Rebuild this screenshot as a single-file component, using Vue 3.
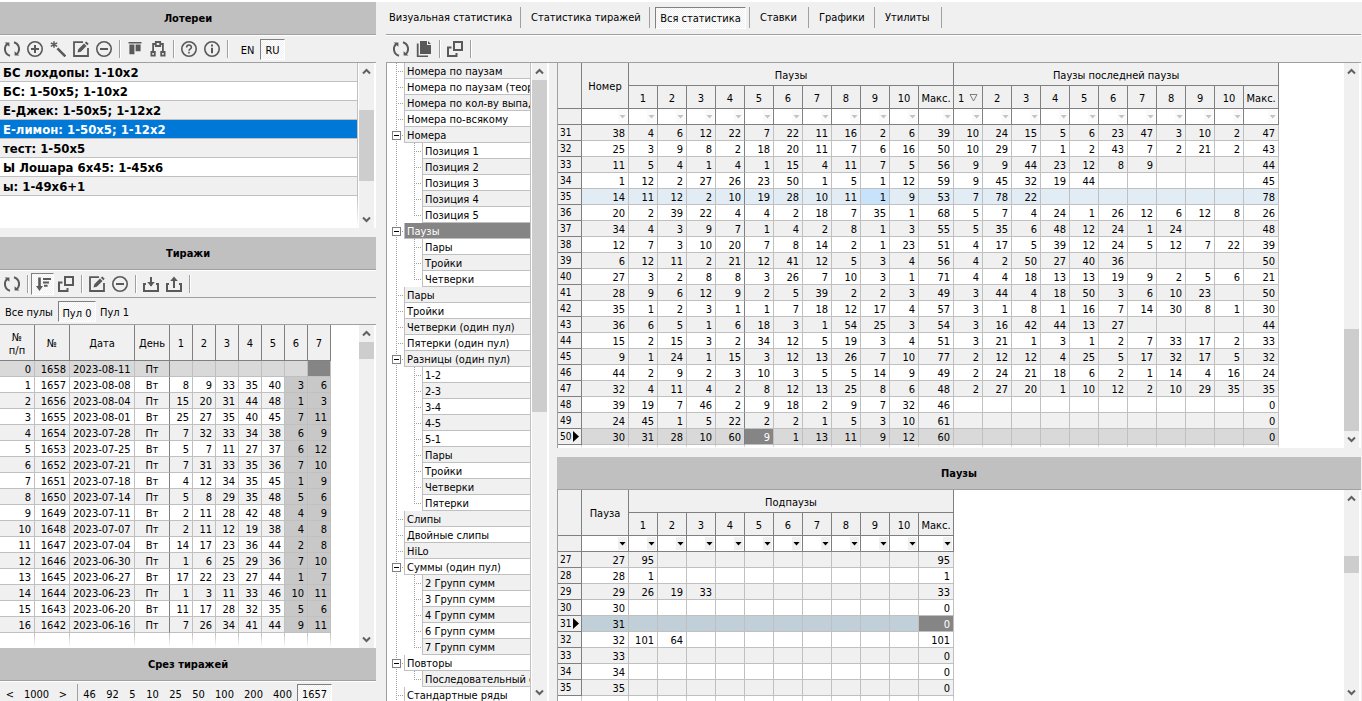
<script setup>
import { h } from 'vue'

const iconShapes = {
  refresh: [
    ['path', { d: 'M6 14.8A7 7 0 0 1 3.6 2.6M10 1.2A7 7 0 0 1 12.4 13.4', 'stroke-width': 2 }],
    ['path', { d: 'M.6 1.4h4.8v4.4zM15.4 14.6h-4.8v-4.4z', class: 'solid' }]
  ],
  plus: [
    ['circle', { cx: 8, cy: 8, r: 7.2 }],
    ['path', { d: 'M8 4v8M4 8h8', 'stroke-width': 2 }]
  ],
  minus: [
    ['circle', { cx: 8, cy: 8, r: 7.2 }],
    ['path', { d: 'M4 8h8', 'stroke-width': 2 }]
  ],
  wand: [
    ['path', { d: 'M7.4 7.4l8 8', 'stroke-width': 2.6 }],
    ['path', { d: 'M4 .2v6.6M.8 1.8l6.4 3.6M7.2 1.8L.8 5.4', 'stroke-width': 1.5 }]
  ],
  edit: [
    ['path', { d: 'M10 1.2H1v13.8h14V7', 'stroke-width': 1.8 }],
    ['path', { d: 'M4.5 11.5l.8-3.2L11 2.6l2.5 2.5-5.7 5.6zM11.8 1.8L13.3.4l2.4 2.4-1.4 1.5z', class: 'solid' }]
  ],
  columns: [
    ['path', { d: 'M1.5 1h13v1.4h-13zM2.4 3.4h5v9.8h-5zM8.6 3.4h5v6.8h-5z', class: 'solid' }]
  ],
  nodes: [
    ['path', { d: 'M5.8 1h4.4v4H5.8zM1.4 11h3.4v3.6H1.4zM11.2 11h3.4v3.6h-3.4zM5.8 3H3.1v8M10.2 3h2.7v8', 'stroke-width': 1.8 }]
  ],
  help: [
    ['circle', { cx: 8, cy: 8, r: 7.2 }],
    ['path', { d: 'M5.6 6.5C5.6 3.2 10.4 3.2 10.4 6.3C10.4 8 8 7.8 8 9.8M8 10.8v1.8' }]
  ],
  info: [
    ['circle', { cx: 8, cy: 8, r: 7.2 }],
    ['path', { d: 'M8 3.6v1.8M8 6.8v5.4', 'stroke-width': 2 }]
  ],
  sort: [
    ['path', { d: 'M3.2 1.5h2.6v8.5H8l-3.5 5L1 10h2.2zM8 2h8v2H8zM8 5.4h6v2H8zM9 8.8h3.6v2H9z', class: 'solid' }]
  ],
  windows: [
    ['path', { d: 'M7 1h8v8H7zM4.5 6.5H1V15h8.5v-3', 'stroke-width': 2 }]
  ],
  download: [
    ['path', { d: 'M3 8H1v7h14V8h-2M8 1v9', 'stroke-width': 2 }],
    ['path', { d: 'M4.2 6h7.6L8 10.6z', class: 'solid' }]
  ],
  upload: [
    ['path', { d: 'M3 8H1v7h14V8h-2M8 12V2', 'stroke-width': 2 }],
    ['path', { d: 'M4.2 5h7.6L8 .4z', class: 'solid' }]
  ],
  copy: [
    ['path', { d: 'M4 0h7v4h4v9H4zM12 0l3 3h-3zM.8 2.6h1.8v12H12V16H.8z', class: 'solid' }]
  ]
}

const Icon = (props) =>
  h(
    'svg',
    { class: 'icon', viewBox: '0 0 16 16', 'aria-hidden': 'true' },
    iconShapes[props.name].map(([tag, attrs]) => h(tag, attrs))
  )
Icon.props = ['name']

const ScrollBar = (props) => {
  const arrow = (label, d) =>
    h('button', { type: 'button', class: 'scroll-arrow', 'aria-label': label }, [
      h('svg', { viewBox: '0 0 9 7', 'aria-hidden': 'true' }, [h('path', { d })])
    ])
  const [before, size, after] = props.parts
  return h('div', { class: 'scrollbar' }, [
    arrow('Вверх', 'M1 5.5L4.5 2L8 5.5'),
    h('div', { class: 'scroll-track' }, [
      h('span', { style: { flexGrow: before } }),
      h('span', { class: 'scroll-thumb', style: { flexGrow: size } }),
      h('span', { style: { flexGrow: after } })
    ]),
    arrow('Вниз', 'M1 1.5L4.5 5L8 1.5')
  ])
}
ScrollBar.props = ['parts']

const lotteryTools = [
  ['refresh', 'Обновить'], ['plus', 'Добавить'], ['wand', 'Мастер'], ['edit', 'Изменить'], ['minus', 'Удалить'], null,
  ['columns', 'Столбцы'], ['nodes', 'Структура'], null,
  ['help', 'Справка'], ['info', 'О программе'], null
]
const drawTools = [
  ['refresh', 'Обновить'], null,
  ['sort', 'Сортировка', true], ['windows', 'Окна'], null,
  ['edit', 'Изменить'], ['minus', 'Удалить'], null,
  ['download', 'Загрузить'], ['upload', 'Выгрузить'], null
]
const statTools = [['refresh', 'Обновить'], ['copy', 'Копировать'], null, ['windows', 'Окна'], null]

const lotteries = [
  'БС лохдопы: 1-10x2', 'БС: 1-50x5; 1-10x2', 'Е-Джек: 1-50x5; 1-12x2', 'Е-лимон: 1-50x5; 1-12x2',
  'тест: 1-50x5', 'Ы Лошара 6x45: 1-45x6', 'ы: 1-49x6+1'
]

const draws = `0 1658 2023-08-11 Пт - - - - - - -
1 1657 2023-08-08 Вт 8 9 33 35 40 3 6
2 1656 2023-08-04 Пт 15 20 31 44 48 1 3
3 1655 2023-08-01 Вт 25 27 35 40 45 7 11
4 1654 2023-07-28 Пт 7 32 33 34 38 6 9
5 1653 2023-07-25 Вт 5 7 11 27 37 6 12
6 1652 2023-07-21 Пт 7 31 33 35 36 7 10
7 1651 2023-07-18 Вт 4 12 34 35 45 1 9
8 1650 2023-07-14 Пт 5 8 29 35 48 5 6
9 1649 2023-07-11 Вт 2 11 28 42 48 4 9
10 1648 2023-07-07 Пт 2 11 12 19 38 4 8
11 1647 2023-07-04 Вт 14 17 23 36 44 2 8
12 1646 2023-06-30 Пт 1 6 25 29 36 7 10
13 1645 2023-06-27 Вт 17 22 23 27 44 1 7
14 1644 2023-06-23 Пт 1 3 11 33 46 10 11
15 1643 2023-06-20 Вт 11 17 28 32 35 5 6
16 1642 2023-06-16 Пт 7 26 34 41 44 9 11`
  .split('\n')
  .map((line) => line.split(' ').map((v) => (v === '-' ? '' : v)))

const slices = ['46', '92', '5', '10', '25', '50', '100', '200', '400']

const tabs = ['Визуальная статистика', 'Статистика тиражей', 'Вся статистика', 'Ставки', 'Графики', 'Утилиты']

const treeData = [
  ['Номера по паузам'], ['Номера по паузам (теория)'], ['Номера по кол-ву выпадений'], ['Номера по-всякому'],
  ['Номера', ['Позиция 1', 'Позиция 2', 'Позиция 3', 'Позиция 4', 'Позиция 5']],
  ['Паузы', ['Пары', 'Тройки', 'Четверки']],
  ['Пары'], ['Тройки'], ['Четверки (один пул)'], ['Пятерки (один пул)'],
  ['Разницы (один пул)', ['1-2', '2-3', '3-4', '4-5', '5-1', 'Пары', 'Тройки', 'Четверки', 'Пятерки']],
  ['Слипы'], ['Двойные слипы'], ['HiLo'],
  ['Суммы (один пул)', ['2 Групп сумм', '3 Групп сумм', '4 Групп сумм', '6 Групп сумм', '7 Групп сумм']],
  ['Повторы', ['Последовательный список']],
  ['Стандартные ряды']
]
const treeRows = treeData.flatMap(([label, children]) => [
  { label, open: Boolean(children), selected: label === 'Паузы' },
  ...(children || []).map((child, i) => ({ label: child, child: true, last: i === children.length - 1 }))
])

// Columns: number, ten pauses, maximum, ten pauses of the last pause, maximum.
const pauseRows = `38 4 6 12 22 7 22 11 16 2 6 39 10 24 15 5 6 23 47 3 10 2 47
25 3 9 8 2 18 20 11 7 6 16 50 10 29 7 1 2 43 7 2 21 2 43
11 5 4 1 4 1 15 4 11 7 5 56 9 9 44 23 12 8 9 - - - 44
1 12 2 27 26 23 50 1 5 1 12 59 9 45 32 19 44 - - - - - 45
14 11 12 2 10 19 28 10 11 1 9 53 7 78 22 - - - - - - - 78
20 2 39 22 4 4 2 18 7 35 1 68 5 7 4 24 1 26 12 6 12 8 26
34 4 3 9 7 1 4 2 8 1 3 55 5 35 6 48 12 24 1 24 - - 48
12 7 3 10 20 7 8 14 2 1 23 51 4 17 5 39 12 24 5 12 7 22 39
6 12 11 2 21 12 41 12 5 3 4 56 4 2 50 27 40 36 - - - - 50
27 3 2 8 8 3 26 7 10 3 1 71 4 4 18 13 13 19 9 2 5 6 21
28 9 6 12 9 2 5 39 2 2 3 49 3 44 4 18 50 3 6 10 23 - 50
35 1 2 3 1 1 7 18 12 17 4 57 3 1 8 1 16 7 14 30 8 1 30
36 6 5 1 6 18 3 1 54 25 3 54 3 16 42 44 13 27 - - - - 44
15 2 15 3 2 34 12 5 19 3 4 51 3 21 1 3 1 2 7 33 17 2 33
9 1 24 1 15 3 12 13 26 7 10 77 2 12 12 4 25 5 17 32 17 5 32
44 2 9 2 3 10 3 5 5 14 9 49 2 24 21 18 6 2 1 14 4 16 24
32 4 11 4 2 8 12 13 25 8 6 48 2 27 20 1 10 12 2 10 29 35 35
39 19 7 46 2 9 18 2 9 7 32 46 - - - - - - - - - - 0
24 45 1 5 22 2 2 1 5 3 10 61 - - - - - - - - - - 0
30 31 28 10 60 9 1 13 11 9 12 60 - - - - - - - - - - 0`
  .split('\n')
  .map((line, i) => ({ id: 31 + i, cells: line.split(' ').map((v) => (v === '-' ? '' : v)) }))

const subPauses = [
  [27, ['95'], '95'], [28, ['1'], '1'], [29, ['26', '19', '33'], '33'], [30, [], '0'], [31, [], '0'],
  [32, ['101', '64'], '101'], [33, [], '0'], [34, [], '0'], [35, [], '0']
].map(([id, values, max]) => ({
  id,
  cells: [String(id), ...Array.from({ length: 10 }, (_, i) => values[i] || ''), max]
}))

const mainCellClass = (row, i) => ({
  split: i === 4,
  hot: row.id === 35 && i === 9,
  current: row.id === 50 && i === 5
})
</script>

<template>
  <div class="app">
    <aside class="side">
      <h2 class="band">Лотереи</h2>
      <div class="toolbar">
        <template v-for="(tool, i) in lotteryTools" :key="i">
          <button v-if="tool" type="button" class="tool" :aria-label="tool[1]"><Icon :name="tool[0]" /></button>
          <span v-else class="sep"></span>
        </template>
        <button type="button" class="lang first">EN</button>
        <button type="button" class="lang pressed">RU</button>
      </div>
      <div class="list-panel">
        <div class="list">
          <button
            v-for="(name, i) in lotteries"
            :key="name"
            type="button"
            class="list-row"
            :class="{ chosen: i === 3 }"
          >{{ name }}</button>
          <span class="list-tail"></span>
        </div>
        <ScrollBar :parts="[30, 71, 30]" />
      </div>

      <h2 class="band spaced">Тиражи</h2>
      <div class="toolbar">
        <template v-for="(tool, i) in drawTools" :key="i">
          <button v-if="tool" type="button" class="tool" :class="{ pressed: tool[2] }" :aria-label="tool[1]">
            <Icon :name="tool[0]" />
          </button>
          <span v-else class="sep"></span>
        </template>
      </div>
      <div class="pools">
        <button type="button">Все пулы</button>
        <button type="button" class="pressed">Пул 0</button>
        <button type="button">Пул 1</button>
      </div>
      <div class="grid-panel">
        <div class="grid-body">
          <table class="grid draws">
            <colgroup>
              <col class="w35" /><col class="w35" /><col class="w65" /><col class="w35" />
              <col v-for="n in 7" :key="n" class="w23" />
            </colgroup>
            <thead>
              <tr class="tall">
                <th>№<br />п/п</th><th>№</th><th>Дата</th><th>День</th>
                <th v-for="n in 7" :key="n">{{ n }}</th>
              </tr>
            </thead>
            <tbody>
              <tr v-for="(row, r) in draws" :key="r" :class="{ active: r === 0 }">
                <td
                  v-for="(value, i) in row"
                  :key="i"
                  :class="{ date: i === 2, day: i === 3, extra: r > 0 && i > 8, current: r === 0 && i === 10 }"
                >{{ value }}</td>
              </tr>
              <tr class="tail"><td v-for="n in 11" :key="n"></td></tr>
            </tbody>
          </table>
        </div>
        <ScrollBar :parts="[0, 17, 270]" />
      </div>

      <h2 class="band">Срез тиражей</h2>
      <div class="slices">
        <button type="button" class="step">&lt;</button>
        <button type="button" class="total">1000</button>
        <button type="button" class="step">&gt;</button>
        <span class="sep"></span>
        <button v-for="s in slices" :key="s" type="button" :class="'digits' + s.length">{{ s }}</button>
        <button type="button" class="digits4 pressed">1657</button>
      </div>
    </aside>

    <main class="main">
      <nav class="tabs">
        <div v-for="(tab, i) in tabs" :key="tab" class="tab">
          <button type="button" :class="{ pressed: i === 2 }">{{ tab }}</button>
        </div>
      </nav>
      <div class="toolbar stat-tools">
        <template v-for="(tool, i) in statTools" :key="i">
          <button v-if="tool" type="button" class="tool" :aria-label="tool[1]"><Icon :name="tool[0]" /></button>
          <span v-else class="sep"></span>
        </template>
      </div>

      <div class="work">
        <div class="tree-panel">
          <ul class="tree">
            <li v-for="(row, i) in treeRows" :key="i" class="tree-row">
              <span class="branch" :class="{ leaf: !row.child }">
                <button v-if="row.open" type="button" class="toggle" :aria-label="'Свернуть ' + row.label"></button>
              </span>
              <span v-if="row.child" class="branch inner" :class="{ last: row.last }"></span>
              <span class="tree-label" :class="{ alt: i % 2 === 0, selected: row.selected }">{{ row.label }}</span>
            </li>
          </ul>
          <ScrollBar :parts="[0, 332, 272]" />
        </div>

        <div class="tables">
          <div class="grid-panel framed">
            <div class="grid-body">
              <table class="grid stats pale">
                <colgroup>
                  <col class="w24" /><col class="w47" />
                  <col v-for="n in 10" :key="n" class="w29" /><col class="w35" />
                  <col v-for="n in 10" :key="'b' + n" class="w29" /><col class="w35" />
                </colgroup>
                <thead>
                  <tr>
                    <th rowspan="2"></th><th rowspan="2">Номер</th>
                    <th colspan="11">Паузы</th><th colspan="11">Паузы последней паузы</th>
                  </tr>
                  <tr>
                    <th v-for="n in 10" :key="n">{{ n }}</th><th>Макс.</th>
                    <th class="sorted">1
                      <svg viewBox="0 0 9 8" aria-hidden="true"><path d="M1 .5h7L4.5 7z" /></svg>
                    </th>
                    <th v-for="n in 9" :key="'b' + n">{{ n + 1 }}</th><th>Макс.</th>
                  </tr>
                  <tr class="filters">
                    <th></th>
                    <td v-for="n in 23" :key="n">
                      <div class="filter"><select :aria-label="'Фильтр столбца ' + n"></select><i></i></div>
                    </td>
                  </tr>
                </thead>
                <tbody>
                  <tr v-for="row in pauseRows" :key="row.id" :class="{ marked: row.id === 35, active: row.id === 50 }">
                    <th><span class="row-id">{{ row.id }}<i v-if="row.id === 50"></i></span></th>
                    <td v-for="(value, i) in row.cells" :key="i" :class="mainCellClass(row, i)">{{ value }}</td>
                  </tr>
                  <tr class="tail short"><th></th><td v-for="n in 23" :key="n"></td></tr>
                </tbody>
              </table>
            </div>
            <ScrollBar :parts="[249, 102, 0]" />
          </div>

          <h2 class="band spaced">Паузы</h2>
          <div class="grid-panel framed grow">
            <div class="grid-body">
              <table class="grid stats">
                <colgroup>
                  <col class="w24" /><col class="w47" />
                  <col v-for="n in 10" :key="n" class="w29" /><col class="w35" />
                </colgroup>
                <thead>
                  <tr><th rowspan="2"></th><th rowspan="2">Пауза</th><th colspan="11">Подпаузы</th></tr>
                  <tr><th v-for="n in 10" :key="n">{{ n }}</th><th>Макс.</th></tr>
                  <tr class="filters">
                    <th></th>
                    <td v-for="n in 12" :key="n">
                      <div class="filter"><select :aria-label="'Фильтр подпауз ' + n"></select><i></i></div>
                    </td>
                  </tr>
                </thead>
                <tbody>
                  <tr v-for="row in subPauses" :key="row.id" :class="{ focused: row.id === 31 }">
                    <th><span class="row-id">{{ row.id }}<i v-if="row.id === 31"></i></span></th>
                    <td v-for="(value, i) in row.cells" :key="i" :class="{ current: row.id === 31 && i === 11 }">{{ value }}</td>
                  </tr>
                  <tr class="tail"><th></th><td v-for="n in 12" :key="n"></td></tr>
                </tbody>
              </table>
            </div>
            <ScrollBar :parts="[49, 17, 111]" />
          </div>
        </div>
      </div>
    </main>
  </div>
</template>

<style>
body {
  margin: 0;
  background: #f0f0f0;
}
.icon {
  width: 16px;
  height: 16px;
  fill: none;
  stroke: #595959;
  stroke-width: 1.6;
}
.icon .solid {
  fill: #595959;
  stroke: none;
}
.scrollbar {
  flex: none;
  display: flex;
  flex-direction: column;
  width: 15px;
  background: #f0f0f0;
}
.scroll-arrow {
  flex: none;
  display: grid;
  place-items: center;
  height: 17px;
  padding: 0;
  border: 0;
  background: #f0f0f0;
}
.scroll-arrow svg {
  width: 9px;
  height: 7px;
  fill: none;
  stroke: #606060;
  stroke-width: 2;
}
.scroll-track {
  flex: 1;
  display: flex;
  flex-direction: column;
}
.scroll-thumb {
  background: #cdcdcd;
}
</style>

<style scoped>
.app,
.app * {
  box-sizing: border-box;
}
.app {
  display: flex;
  gap: 10px;
  height: 100vh;
  overflow: hidden;
  border-top: 2px solid #fff;
  background: #f0f0f0;
  color: #000;
  font: 11px/13px "DejaVu Sans Condensed", "DejaVu Sans", "Noto Sans", sans-serif;
}
button {
  margin: 0;
  padding: 0;
  border: 1px solid transparent;
  background: none;
  color: inherit;
  font: inherit;
  white-space: nowrap;
}
button.pressed {
  border-color: #808080 #fff #fff #808080;
  background: repeating-conic-gradient(#fff 0 25%, #f0f0f0 0 50%) 0 0 / 2px 2px;
}
.side {
  flex: none;
  width: 376px;
  display: flex;
  flex-direction: column;
}
.side > * {
  flex: none;
}
.main {
  flex: 1;
  min-width: 0;
  display: flex;
  flex-direction: column;
  margin-right: 1px;
}
.band {
  flex: none;
  margin: 0;
  height: 33px;
  padding-top: 2px;
  border-bottom: 1px solid #a0a0a0;
  background: #c0c0c0;
  font-size: 11px;
  line-height: 30px;
  font-weight: bold;
  text-align: center;
}
.band.spaced {
  margin-top: 9px;
}
.toolbar {
  flex: none;
  display: flex;
  align-items: center;
  height: 28px;
  border-top: 1px solid #fff;
  border-bottom: 1px solid #a0a0a0;
}
.tool {
  display: grid;
  place-items: center;
  width: 23px;
  height: 22px;
}
.sep {
  flex: none;
  width: 8px;
  height: 18px;
  background: linear-gradient(90deg, transparent 4px, #a0a0a0 4px 5px, #fff 5px 6px, transparent 6px);
}
.lang {
  width: 25px;
  height: 21px;
  padding-top: 2px;
}
.lang.first {
  margin-left: 4px;
}
.list-panel {
  display: flex;
  height: 165px;
  padding-right: 2px;
  background: #fff;
}
.list {
  flex: 1;
  display: flex;
  flex-direction: column;
  margin-right: 1px;
}
.list-row {
  height: 19px;
  padding: 2px 3px 0;
  border: 0;
  border-right: 1px solid #c0c0c0;
  border-bottom: 1px solid #c0c0c0;
  background: #fff;
  font-size: 13px;
  line-height: 16px;
  font-weight: bold;
  text-align: left;
}
.list-row:nth-child(odd) {
  background: #f0f0f0;
}
.list-row.chosen {
  background: #0078d7;
  color: #fff;
}
.list-tail {
  flex: 1;
  background: linear-gradient(#c0c0c0, #fff) right / 1px 100% no-repeat;
}
.pools {
  display: flex;
  height: 26px;
  padding: 3px 0 2px 1px;
}
.pools button {
  padding: 2px 3px 0;
  min-width: 36px;
}
.pools .pressed {
  margin: 0 0 0 1px;
  padding-top: 4px;
  min-width: 38px;
}
.grid-panel {
  display: flex;
  justify-content: space-between;
  padding-right: 2px;
  border-top: 1px solid #a0a0a0;
  background: #fff;
}
.grid-panel.framed {
  border-left: 1px solid #a0a0a0;
}
.grid-panel.grow {
  flex: 1;
  min-height: 0;
  border-top: 0;
}
.grid-body {
  min-width: 0;
  overflow: hidden;
}
.grid {
  width: 0;
  table-layout: fixed;
  border-collapse: separate;
  border-spacing: 0;
}
.w23 { width: 23px; }
.w24 { width: 24px; }
.w29 { width: 29px; }
.w35 { width: 35px; }
.w47 { width: 47px; }
.w65 { width: 65px; }
.grid th {
  height: 23px;
  padding: 2px 0 0;
  border-right: 1px solid #808080;
  border-bottom: 1px solid #808080;
  background: #f0f0f0;
  font-weight: normal;
  text-align: center;
  white-space: nowrap;
}
.grid .tall th {
  height: 36px;
}
.grid td {
  height: 16px;
  padding: 2px 3px 0 0;
  border-right: 1px solid #c0c0c0;
  border-bottom: 1px solid #c0c0c0;
  line-height: 13px;
  text-align: right;
  white-space: nowrap;
}
.grid tbody tr:nth-child(odd) td {
  background: #f0f0f0;
}
.grid tbody th {
  height: 16px;
  padding: 0;
  line-height: 15px;
  font-size: 10px;
}
.row-id {
  display: flex;
  align-items: center;
  justify-content: space-between;
  padding: 0 2px;
}
.row-id i {
  width: 6px;
  height: 11px;
  background: #000;
  clip-path: polygon(0 0, 100% 50%, 0 100%);
}
.grid tbody .date {
  padding: 2px 0 0 3px;
  text-align: left;
}
.grid tbody .day {
  padding: 2px 0 0;
  border-right-color: #808080;
  text-align: center;
}
.grid tbody tr .extra,
.grid tbody tr:nth-child(odd) .extra {
  background: #c8c8c8;
}
.grid tbody tr.active td {
  background: #d9d9d9;
}
.grid tbody tr.marked td {
  background: #e1ecf5;
}
.grid tbody tr.focused td {
  background: #c1cfd8;
}
.grid tbody tr.marked td.hot {
  background: #c7e3fb;
}
.grid tbody tr td.current {
  background: #858585;
  color: #fff;
}
.grid tbody .split {
  border-right-color: #808080;
}
.grid tbody tr.tail td,
.grid tbody tr.tail th {
  height: 15px;
  padding: 0;
  border: 0;
  background: linear-gradient(#c0c0c0, #fff) right / 1px 100% no-repeat;
}
.grid tbody tr.tail.short td,
.grid tbody tr.tail.short th {
  height: 3px;
  line-height: 3px;
}
.sorted svg {
  width: 9px;
  height: 8px;
  margin-left: 2px;
  fill: none;
  stroke: #808080;
}
.grid .filters th {
  height: 16px;
}
.grid .filters td {
  padding: 0;
  border-color: #808080;
  background: #fff;
}
.filter {
  display: grid;
  align-items: center;
  height: 15px;
}
.filter > * {
  grid-area: 1 / 1;
}
.filter select {
  width: 100%;
  height: 15px;
  padding: 0;
  border: 0;
  appearance: none;
  background: linear-gradient(#f0f0f0, #f0f0f0) right 1px center / 9px 13px no-repeat #fff;
}
.filter i {
  justify-self: end;
  width: 7px;
  height: 4px;
  margin-right: 2px;
  background: #000;
  clip-path: polygon(0 0, 100% 0, 50% 100%);
  pointer-events: none;
}
.pale .filter select {
  background-image: linear-gradient(#fafafa, #fafafa);
}
.pale .filter i {
  background: #c4c4c4;
}
.slices {
  display: flex;
  padding: 2px 0 0;
  border-top: 1px solid #fff;
}
.slices button {
  height: 17px;
  padding-top: 4px;
  border-bottom: 0;
  line-height: 12px;
}
.slices .step {
  width: 20px;
}
.slices .total {
  width: 33px;
}
.slices .sep {
  width: 5px;
  height: 17px;
}
.digits1 { width: 17px; }
.digits2 { width: 23px; }
.digits3 { width: 29px; }
.digits4 { width: 35px; }
.tabs {
  flex: none;
  display: grid;
  grid-template-columns: 135px 129px 100px 59px 66px 67px;
  height: 33px;
  border-bottom: 1px solid #a0a0a0;
}
.tab {
  display: flex;
  align-items: center;
  height: 31px;
  background: linear-gradient(#a0a0a0, #a0a0a0) right 5px / 1px 21px no-repeat;
}
.tab button {
  height: 22px;
  padding: 0 0 1px;
  margin-left: 9px;
}
.tab:first-child button {
  margin-left: 2px;
}
.tab .pressed {
  flex: 1;
  margin: 0 4px 0 5px;
  padding: 1px 0 0;
}
.stat-tools {
  padding-left: 3px;
}
.work {
  flex: 1;
  min-height: 0;
  display: flex;
  gap: 8px;
}
.tree-panel {
  flex: none;
  width: 163px;
  display: flex;
  padding-right: 2px;
  border-left: 1px solid #a0a0a0;
  background: #fff;
}
.tree {
  flex: 1;
  min-width: 0;
  margin: 0 1px 0 0;
  padding: 0;
  overflow: hidden;
  list-style: none;
}
.tree-row {
  display: flex;
  height: 16px;
}
.branch {
  flex: none;
  width: 17px;
  padding: 4px 0 0 5px;
  background: repeating-linear-gradient(#a0a0a0 0 1px, transparent 1px 2px) 9px 0 / 1px 100% no-repeat;
}
.branch.leaf {
  background:
    repeating-linear-gradient(#a0a0a0 0 1px, transparent 1px 2px) 9px 0 / 1px 100% no-repeat,
    repeating-linear-gradient(90deg, #a0a0a0 0 1px, transparent 1px 2px) 9px 8px / 8px 1px no-repeat;
}
.branch.inner {
  width: 18px;
  background:
    repeating-linear-gradient(#a0a0a0 0 1px, transparent 1px 2px) 10px 0 / 1px 100% no-repeat,
    repeating-linear-gradient(90deg, #a0a0a0 0 1px, transparent 1px 2px) 10px 8px / 8px 1px no-repeat;
}
.branch.inner.last {
  background-size: 1px 8px, 8px 1px;
}
.toggle {
  display: block;
  width: 9px;
  height: 9px;
  border-color: #808080;
  background: linear-gradient(#000, #000) center / 5px 1px no-repeat #fff;
}
.tree-label {
  flex: 1;
  min-width: 0;
  padding: 2px 0 0 2px;
  overflow: hidden;
  border: 1px solid #c0c0c0;
  border-top: 0;
  background: #fff;
  line-height: 13px;
  white-space: nowrap;
}
.tree-label.alt {
  background: #f0f0f0;
}
.tree-label.selected {
  background: #858585;
  color: #fff;
}
.tables {
  flex: 1;
  min-width: 0;
  display: flex;
  flex-direction: column;
  margin-top: -1px;
}
</style>
